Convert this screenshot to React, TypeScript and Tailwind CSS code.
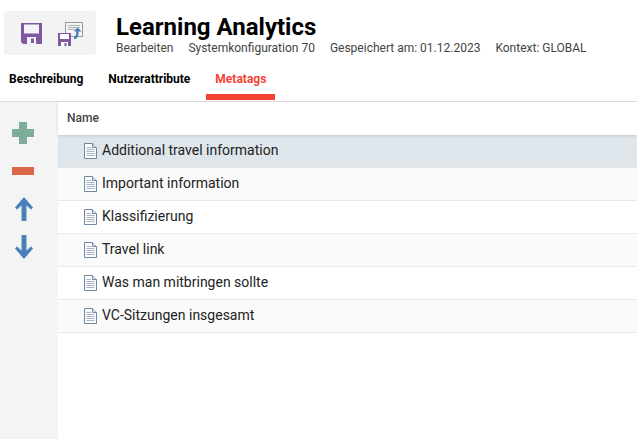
const rows = ["Additional travel information","Important information","Klassifizierung","Travel link","Was man mitbringen sollte","VC-Sitzungen insgesamt"];

function Disk({ size }: { size: number }) {
  return (
    <svg width={size} height={size} viewBox="0 0 21 21" className="block">
      <path d="M0 0H21V21H2L0 19Z" fill="#7f57a3" />
      <rect x="3" y="1.5" width="15" height="9" fill="#f6f3f9" />
      <rect x="6" y="14" width="9" height="7" fill="#f6f3f9" />
      <rect x="10" y="15.5" width="3" height="4.5" fill="#7f57a3" />
    </svg>
  );
}

function Doc() {
  return (
    <svg width="13" height="16" viewBox="0 0 13 16" className="block shrink-0">
      <path d="M.5.5H8.5L12.5 4.5V15.5H.5Z" fill="#fbfcfe" stroke="#7388a3" />
      <path d="M8.5.5V4.5H12.5" fill="#dfe6f0" stroke="#7388a3" />
      <path d="M2.5 4.500H7M2.500 6.500H10.500M2.500 8.500H10.500M2.500 10.500H10.500M2.500 12.500H10.500" stroke="#aab5c6" />
    </svg>
  );
}

function Transfer() {
  return (
    <svg width="25" height="24" viewBox="0 0 25 24" className="block">
      <rect x="7.500" y=".5" width="17" height="14" fill="#f4f4f4" stroke="#9a9a9a" />
      <path d="M10 3.500H22M10 5.500H22M10 7.500H22" stroke="#b3b3b3" />
      <path d="M16 16C19 16 19.500 12 19.500 9" fill="none" stroke="#4a7fb5" strokeWidth="2.500" />
      <path d="M16 9.500L19.500 5.500L23.500 9.500Z" fill="#4a7fb5" />
      <rect x="0" y="11" width="13" height="13" fill="#7f57a3" />
      <rect x="2" y="12" width="9" height="5" fill="#fff" />
      <rect x="3" y="20" width="7" height="4" fill="#fff" />
      <rect x="6.500" y="21" width="2" height="3" fill="#7f57a3" />
    </svg>
  );
}

function Arrow({ down }: { down?: boolean }) {
  return (
    <svg width="18" height="24" viewBox="0 0 18 24" className={down ? "block rotate-180" : "block"}>
      <path d="M9 0L18 10.500L16 12.500L11.500 8.500V24H6.500V8.500L2 12.500L0 10.500Z" fill="#4a80b8" />
    </svg>
  );
}

export default function App() {
  return (
    <div className="flex h-[439px] w-[637px] flex-col overflow-hidden bg-white font-['Roboto',sans-serif]">
      <header className="h-[102px] shrink-0 border-b border-[#dedede]">
        <div className="flex items-start pl-1 pt-[11px]">
          <div className="flex h-[44px] w-[92px] items-center gap-[16px] rounded-[4px] bg-[#f3f3f3] pl-[17px] pt-[1px]">
            <Disk size={21} />
            <Transfer />
          </div>
          <div className="ml-5 flex flex-col">
            <h1 className="mt-[2px] text-[24px] leading-[28px] font-bold text-black">Learning Analytics</h1>
            <div className="flex gap-[15px] text-[12px] leading-[14px] text-[#444]">
              <span>Bearbeiten</span>
              <span>Systemkonfiguration 70</span>
              <span>Gespeichert am: 01.12.2023</span>
              <span>Kontext: GLOBAL</span>
            </div>
          </div>
        </div>
        <nav className="mt-[8px] flex text-[12px] leading-[14px] font-bold">
          <a className="px-[9px] pt-[9px] text-black">Beschreibung</a>
          <a className="ml-[7px] px-[9px] pt-[9px] text-black">Nutzerattribute</a>
          <a className="ml-[7px] h-[37px] border-b-[6px] border-[#f44336] px-[9px] pt-[9px] text-[#f44336]">Metatags</a>
        </nav>
      </header>
      <div className="flex min-h-0 flex-1">
        <aside className="flex w-[58px] shrink-0 flex-col bg-[#f4f4f4] pl-[12px]">
          <svg width="22" height="22" viewBox="0 0 22 22" className="mt-[20px] block"><path d="M7 0H15V7H22V15H15V22H7V15H0V7H7Z" fill="#7cad99" /></svg>
          <div className="mt-[23px] h-[8px] w-[22px] bg-[#d9674a]" />
          <div className="ml-[3px] mt-[22px]"><Arrow /></div>
          <div className="ml-[3px] mt-[14px]"><Arrow down /></div>
        </aside>
        <main className="min-w-0 flex-1">
          <div className="relative h-[33px] pl-[9px] pt-[9px] text-[12px] leading-[14px] font-medium text-[#444] shadow-[0_1px_3px_rgba(0,0,0,0.12)]">Name</div>
          {rows.map((r, i) => (
            <div key={r} className={`flex h-[33px] items-center gap-[5px] border-b border-[#e8e8e8] pl-[26px] text-[14px] text-[#222] ${i === 0 ? "bg-[#dee6ec]" : i % 2 ? "bg-[#fafafa]" : "bg-white"}`}>
              <Doc />
              <span className="-mt-[2px]">{r}</span>
            </div>
          ))}
        </main>
      </div>
    </div>
  );
}
